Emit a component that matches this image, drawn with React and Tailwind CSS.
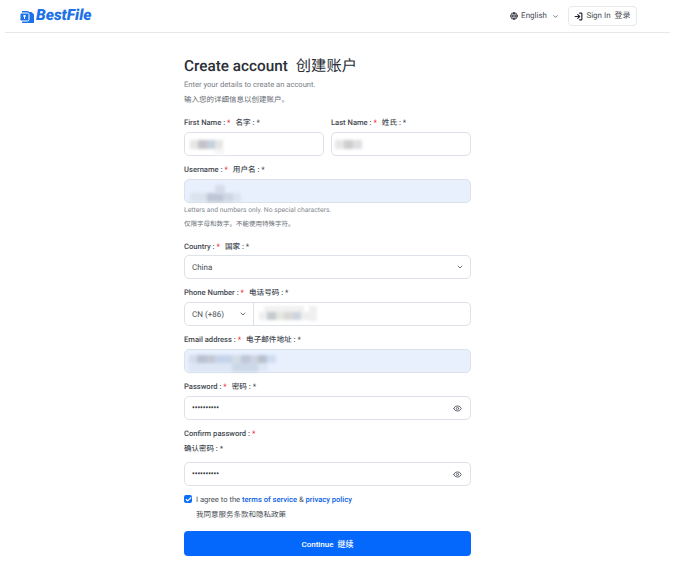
import React from "react";
import { ChevronDown, Eye, Globe, LogIn, Check } from "lucide-react";

const FONT = "font-['Roboto','Noto_Sans_CJK_SC',sans-serif] [text-rendering:geometricPrecision]";

const Smudge = ({ patches }) => (
  <div className="absolute inset-0 overflow-hidden rounded-[5px] blur-[1.5px]">
    {patches.map(([x, y, w, h, c], i) => (
      <div key={i} className="absolute" style={{ left: x, top: y, width: w, height: h, background: c }} />
    ))}
  </div>
);

const Label = ({ en, cn }) => (
  <div className="h-[14px] text-[7.6px] leading-[16px] font-medium text-[#454a52]">
    {en} : <span className="text-[#ef2b2b]">*</span>
    <span className="ml-[5px]">{cn} : *</span>
  </div>
);

const Input = ({ filled, children }) => (
  <div
    className={`relative h-[24px] rounded-[5px] border border-[#dde1e8] text-[8px] flex items-center ${
      filled ? "bg-[#e8f0fe]" : "bg-white"
    }`}
  >
    {children}
  </div>
);

const PasswordInput = () => (
  <Input>
    <span className="ml-[7px] text-[7.5px] leading-none font-bold text-[#30343a]">••••••••••</span>
    <Eye className="ml-auto mr-[8px] w-[9px] h-[9px] text-[#5d636b]" strokeWidth={2.6} />
  </Input>
);

export default function App() {
  return (
    <div className={`${FONT} bg-white min-h-[569px] text-[#30343a]`}>
      {/* header */}
      <div className="mx-[5px] h-[33px] border-b border-[#e6e8ec] flex items-center pl-[15px] pr-[33px]">
        <svg width="14" height="13" viewBox="0 0 14 13" className="mr-[2px]">
          <path d="M2 1h6l1 1h2.5L14 4.5V13H2z" fill="#1d72e8" />
          <rect x="0" y="3" width="9" height="8" rx="1.5" fill="#1d72e8" stroke="#fff" strokeWidth="1" />
          <path d="M4.5 5v4M3 6h3" stroke="#fff" strokeWidth="1" />
        </svg>
        <span className="italic font-black text-[15.5px] leading-none text-[#1d72e8]">BestFile</span>
        <div className="ml-auto flex items-center text-[8px] text-[#4a4f56]">
          <Globe className="w-[8px] h-[8px] text-[#30343a]" strokeWidth={2.8} />
          <span className="ml-[3px]">English</span>
          <ChevronDown className="ml-[5px] w-[7px] h-[7px]" strokeWidth={2.6} />
        </div>
        <div className="ml-[9px] w-[69px] h-[20px] rounded-[4px] border border-[#e6e8ee] flex items-center justify-center text-[8px] text-[#4a4f56]">
          <LogIn className="w-[9px] h-[9px] text-[#20242a]" strokeWidth={3} />
          <span className="ml-[3px]">Sign In</span>
          <span className="ml-[4px]">登录</span>
        </div>
      </div>

      {/* form */}
      <div className="ml-[184px] w-[287px]">
        <h1 className="mt-[22px] h-[20px] text-[15.3px] leading-[22px] font-medium text-[#2b2f36]">
          Create account<span className="ml-[8px] font-normal">创建账户</span>
        </h1>
        <p className="mt-[2px] h-[14px] text-[7.6px] leading-[16px] text-[#7a8088]">Enter your details to create an account.</p>
        <p className="mt-[1px] h-[14px] text-[7.5px] leading-[16px] text-[#62676e]">输入您的详细信息以创建账户。</p>

        <div className="mt-[9px] grid grid-cols-2 gap-x-[7px]">
          <div>
            <Label en="First Name" cn="名字" />
            <div className="mt-[3px]">
              <Input>
                <Smudge patches={[[5, 7, 8, 9, "#e6e6e6"], [13, 7, 9, 9, "#c4c2c8"], [22, 7, 8, 9, "#c6d0de"], [30, 7, 8, 9, "#e4e6e4"], [30, 16, 9, 7, "#f6f6f6"]]} />
              </Input>
            </div>
          </div>
          <div>
            <Label en="Last Name" cn="姓氏" />
            <div className="mt-[3px]">
              <Input>
                <Smudge patches={[[3, 7, 9, 9, "#e6e6e6"], [12, 7, 9, 9, "#cfcdcf"], [21, 7, 9, 9, "#dfdfe3"]]} />
              </Input>
            </div>
          </div>
        </div>

        <div className="mt-[6px]">
          <Label en="Username" cn="用户名" />
          <div className="mt-[3px]">
            <Input filled>
              <Smudge patches={[[5, 13, 17, 9, "#dbe3ee"], [22, 13, 16, 9, "#bfc7d6"], [30, 5, 10, 9, "#d6dde9"], [38, 13, 10, 9, "#cfd7e4"], [48, 13, 8, 9, "#dbe3ee"]]} />
            </Input>
          </div>
          <p className="h-[12px] text-[6.8px] leading-[14px] text-[#85898f]">Letters and numbers only. No special characters.</p>
          <p className="mt-[2px] h-[12px] text-[6.5px] leading-[14px] text-[#6a6f76]">仅限字母和数字。不能使用特殊字符。</p>
        </div>

        <div className="mt-[10px]">
          <Label en="Country" cn="国家" />
          <div className="mt-[2px]">
            <Input>
              <span className="ml-[7px] mt-[2px] text-[#4a4f56]">China</span>
              <ChevronDown className="ml-auto mr-[6px] w-[8px] h-[8px] text-[#4b5058]" strokeWidth={2.4} />
            </Input>
          </div>
        </div>

        <div className="mt-[6px]">
          <Label en="Phone Number" cn="电话号码" />
          <div className="mt-[3px]">
            <Input>
              <div className="w-[69px] flex items-center h-full border-r border-[#dde1e8] text-[#4a4f56]">
                <span className="ml-[7px] mt-[2px]">CN (+86)</span>
                <ChevronDown className="ml-auto mr-[6px] w-[8px] h-[8px]" strokeWidth={2.4} />
              </div>
              <div className="absolute left-[71px] top-0 bottom-0 right-0">
                <Smudge patches={[[8, 3, 40, 7, "#f1f1f1"], [3, 9, 8, 8, "#eeeeee"], [11, 9, 9, 8, "#c6cacc"], [20, 9, 8, 8, "#e2e6e0"], [28, 9, 9, 8, "#d8d8d4"], [37, 9, 8, 8, "#ccd4e0"], [45, 9, 8, 8, "#eeeeee"], [53, 3, 8, 15, "#f0f0f0"]]} />
              </div>
            </Input>
          </div>
        </div>

        <div className="mt-[6px]">
          <Label en="Email address" cn="电子邮件地址" />
          <div className="mt-[3px]">
            <Input filled>
              <Smudge patches={[[4, 5, 8, 8, "#d6dde9"], [12, 5, 9, 8, "#b8c2d2"], [21, 5, 9, 8, "#c2c8d4"], [30, 5, 17, 8, "#c6d4ea"], [47, 5, 9, 8, "#d4dce6"], [56, 5, 9, 8, "#bcc8d8"], [65, 5, 8, 8, "#cfd3e2"], [73, 5, 9, 8, "#b8c2cf"], [82, 5, 9, 8, "#d0dcf2"], [4, 13, 44, 9, "#dde6f5"], [47, 13, 26, 10, "#ccd8e8"], [73, 13, 10, 8, "#dce6f4"]]} />
            </Input>
          </div>
        </div>

        <div className="mt-[6px]">
          <Label en="Password" cn="密码" />
          <div className="mt-[3px]">
            <PasswordInput />
          </div>
        </div>

        <div className="mt-[6px]">
          <div className="h-[14px] text-[7.6px] leading-[16px] font-medium text-[#454a52]">
            Confirm password : <span className="text-[#ef2b2b]">*</span>
          </div>
          <div className="mt-[1px] h-[14px] text-[7.5px] leading-[16px] font-medium text-[#454a52]">确认密码 : *</div>
          <div className="mt-[7px]">
            <PasswordInput />
          </div>
        </div>

        <div className="mt-[7px] flex items-center h-[12px]">
          <div className="w-[8px] h-[8px] rounded-[2px] bg-[#0d6efd] flex items-center justify-center">
            <Check className="w-[7px] h-[7px] text-white" strokeWidth={4} />
          </div>
          <span className="ml-[4px] mt-[2px] text-[7.6px] text-[#4a4f56]">
            I agree to the <span className="font-medium text-[#0b63e5]">terms of service</span> &{" "}
            <span className="font-medium text-[#0b63e5]">privacy policy</span>
          </span>
        </div>
        <p className="mt-[3px] ml-[12px] h-[12px] text-[7.5px] leading-[14px] text-[#4a4f56]">我同意服务条款和隐私政策</p>

        <button className="mt-[11px] w-full h-[25px] pt-[2px] rounded-[4px] bg-[#0568fd] text-white text-[8px] font-medium">
          Continue<span className="ml-[4px]">继续</span>
        </button>
      </div>
    </div>
  );
}
